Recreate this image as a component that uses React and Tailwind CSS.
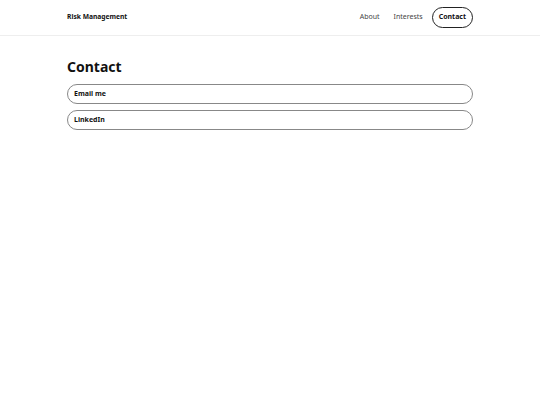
export default function App() {
  return (
    <div className="min-h-screen bg-white text-[#111] font-['Noto_Sans',sans-serif]">
      {/* Header */}
      <header className="border-b border-[#eeeeee]">
        <div className="mx-auto w-[406px] h-[35px] flex items-center justify-between">
          <span className="text-[6.7px] font-bold">Risk Management</span>
          <nav className="flex items-center text-[7px] text-[#444]">
            <span className="mr-[14px]">About</span>
            <span className="mr-[9px]">Interests</span>
            <span className="h-[21px] px-[6px] flex items-center rounded-full border border-[#222] font-bold text-[#111]">
              Contact
            </span>
          </nav>
        </div>
      </header>

      {/* Main */}
      <main className="mx-auto w-[406px] pt-[21px]">
        <h1 className="text-[14px] leading-[20px] font-bold mb-[7px]">Contact</h1>
        <div className="flex flex-col gap-[6px]">
          <a className="h-[20px] flex items-center px-[6px] rounded-full border border-[#888] text-[7px] font-bold">
            Email me
          </a>
          <a className="h-[20px] flex items-center px-[6px] rounded-full border border-[#888] text-[7px] font-bold">
            LinkedIn
          </a>
        </div>
      </main>
    </div>
  );
}
